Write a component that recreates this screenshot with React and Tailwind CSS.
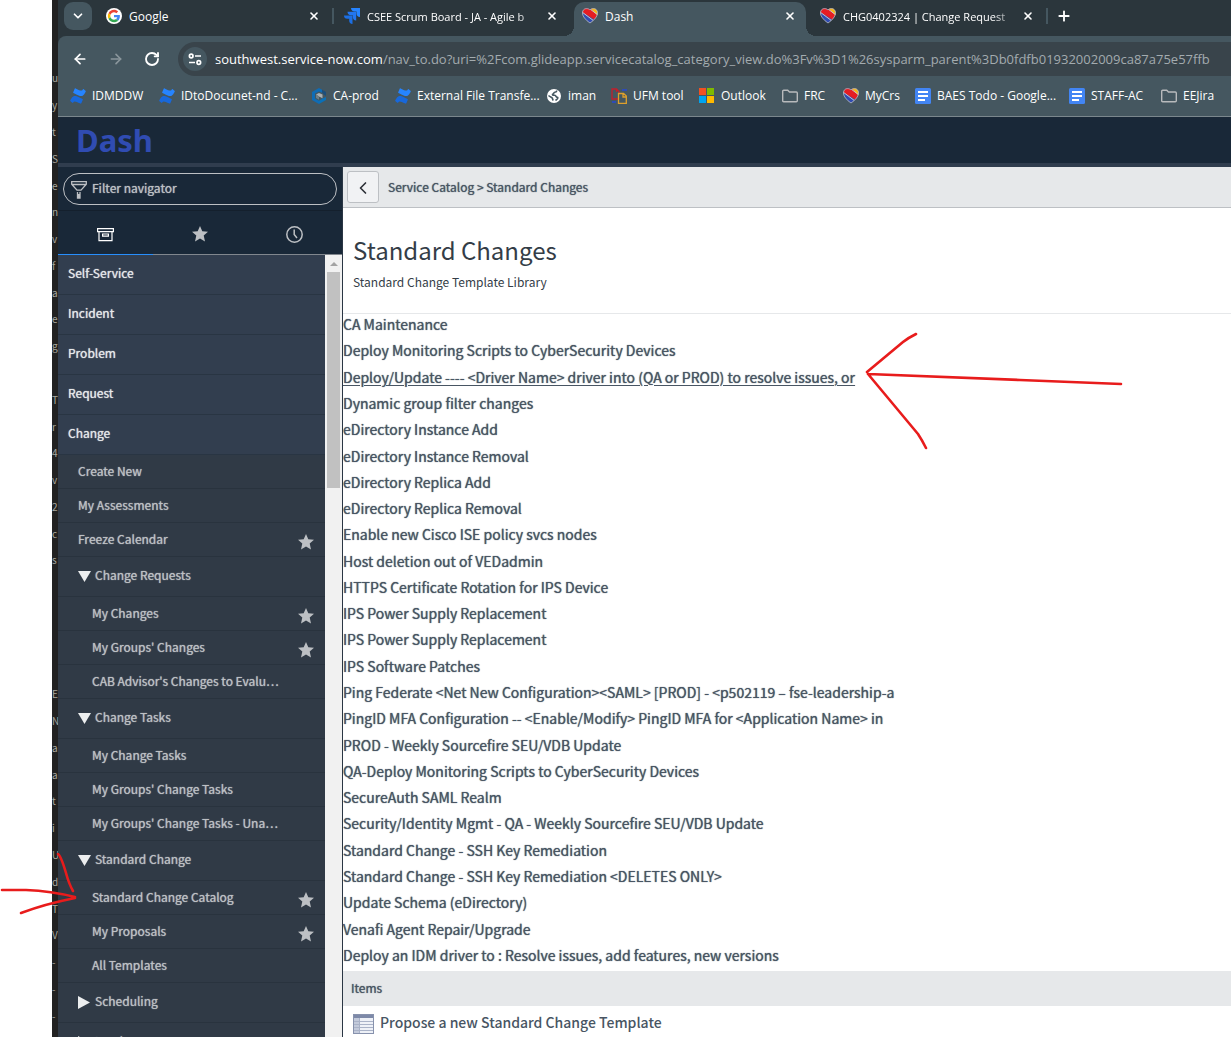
import React from "react";
import { ArrowLeft, ArrowRight, RotateCw, ChevronDown, ChevronLeft, Plus, X } from "lucide-react";

const UI = "font-['Open_Sans','Noto_Sans',sans-serif]";
const SRC = "font-['Noto_Sans_CJK_SC','Noto_Sans',sans-serif]";

function GoogleIcon() {
  return (
    <svg className="size-4 shrink-0" viewBox="0 0 48 48" aria-hidden="true">
      <circle cx="24" cy="24" r="24" fill="#fff" />
      <g transform="translate(5.5 5.5) scale(.77)">
        <path fill="#EA4335" d="M24 9.5c3.54 0 6.71 1.22 9.21 3.6l6.85-6.85C35.9 2.38 30.47 0 24 0 14.62 0 6.51 5.38 2.56 13.22l7.98 6.19C12.43 13.72 17.74 9.5 24 9.5z" />
        <path fill="#4285F4" d="M46.98 24.55c0-1.57-.15-3.09-.38-4.55H24v9.02h12.94c-.58 2.96-2.26 5.48-4.78 7.18l7.73 6c4.51-4.18 7.09-10.36 7.09-17.65z" />
        <path fill="#FBBC05" d="M10.53 28.59A14.5 14.5 0 0 1 9.77 24c0-1.6.27-3.14.76-4.59l-7.98-6.19A23.9 23.9 0 0 0 0 24c0 3.88.92 7.54 2.56 10.78l7.97-6.19z" />
        <path fill="#34A853" d="M24 48c6.48 0 11.93-2.13 15.89-5.81l-7.73-6c-2.15 1.45-4.92 2.3-8.16 2.3-6.26 0-11.57-4.22-13.47-9.91l-7.98 6.19C6.51 42.62 14.62 48 24 48z" />
      </g>
    </svg>
  );
}

function JiraIcon() {
  return (
    <svg className="size-4 shrink-0" viewBox="0 0 16 16" aria-hidden="true">
      <path fill="#2684ff" d="M7 0h9v9c-2.200 0-3.500-1.500-3.500-3.500v-2h-2C8.500 3.500 7 2.200 7 0z" />
      <path fill="#2276f0" d="M3.500 3.800h8.700v8.700c-2.200 0-3.400-1.500-3.400-3.400V7.200H6.900c-2 0-3.400-1.200-3.400-3.400z" />
      <path fill="#1c6fe3" d="M0 7.500h8.500V16c-2.200 0-3.300-1.500-3.300-3.300v-1.900H3.300C1.300 10.800 0 9.600 0 7.500z" />
    </svg>
  );
}

function HeartIcon() {
  return (
    <svg className="size-4 shrink-0" viewBox="0 0 16 16" aria-hidden="true">
      <defs>
        <clipPath id="heart">
          <path d="M8 2C6.500.3 3 0 1.400 2-.4 4.500.6 7.500 2.500 10c1.500 2 3.500 3.800 5.500 5 2-1.200 4-3 5.500-5 1.900-2.500 2.900-5.500 1.100-8C13 0 9.500.3 8 2z" />
        </clipPath>
      </defs>
      <g clipPath="url(#heart)">
        <path fill="#304cb2" d="M0 0h16v16H0z" />
        <path fill="#e51d23" d="M0 0h10l6 6v4l-3 2L0 4z" />
        <path fill="#f9b612" d="M8 0h8v8z" />
        <path stroke="#c6c9cc" d="M0 4l12 9M8 1l8 6" />
      </g>
      <path fill="none" stroke="#b9bcc2" strokeWidth=".8" d="M8 2C6.500.3 3 0 1.400 2-.4 4.500.6 7.500 2.500 10c1.500 2 3.500 3.800 5.500 5 2-1.200 4-3 5.500-5 1.900-2.500 2.900-5.500 1.100-8C13 0 9.500.3 8 2z" />
    </svg>
  );
}

function ConfluenceIcon() {
  return (
    <svg className="size-4 shrink-0" viewBox="0 0 16 16" aria-hidden="true">
      <path fill="#1868db" d="M.3 12.300 1.800 9.800C3.600 7.300 5.700 7.600 9 9.200l3.500 1.700c.4.200.5.500.3.900l-1.500 3.500c-.2.400-.5.500-.9.300C5.200 13.200 4.500 12.600 3.200 14.600c-.3.400-.6.400-.9.200L.5 13.200c-.3-.2-.4-.5-.2-.9z" />
      <path fill="#2684ff" d="M15.700 3.700 14.200 6.200C12.400 8.700 10.300 8.400 7 6.800L3.500 5.100c-.4-.2-.5-.5-.3-.9L4.700.7c.2-.4.5-.5.9-.3 5.200 2.400 5.900 3 7.200 1 .3-.4.6-.4.900-.2l1.800 1.600c.3.200.4.500.2.900z" />
    </svg>
  );
}

function CubeIcon() {
  return (
    <svg className="size-4 shrink-0" viewBox="0 0 16 16" aria-hidden="true">
      <path fill="#0f6cb6" d="m8 0 3 1.700v3L8 3.500 4 5.500v5l4 2.200v3.300l-7-4V4z" />
      <path fill="#1d4f7c" d="m11 1.700 4 2.300v4l-3-2V5.200l-1-.5z" />
      <path fill="#0a70b8" d="m15 9-3 1.200L8 12.700V16l7-4z" />
      <path fill="#a8b0b5" d="m8 5 3.500 1.500v3.700L8 8.500 5 6.600z" />
      <path fill="#6b7f8a" d="M5 6.600 8 8.500v3.300L5 10z" />
    </svg>
  );
}

function GlobeIcon() {
  return (
    <svg className="size-4 shrink-0" viewBox="0 0 16 16" aria-hidden="true">
      <circle cx="8" cy="8" r="7" fill="#fff" />
      <path fill="none" stroke="#455760" strokeWidth="1.600" d="M10.800 2.500c0 1.500-1 1.700-2 1.800-1.200.2-.9 1.500-1.900 1.700-.6.100-.5 1.200.3 1.300h1.600c1.200.2.9 1.600 2 1.800.8.100 1.200.2 1 1-.3 1.200-1.500 1.400-2.300 2.400M2.500 7.500c1.500 1.500 3.300 1.600 3.800 2.600.4 1 .3 1.500 1 2.400" />
    </svg>
  );
}

function UfmIcon() {
  return (
    <svg className="size-4 shrink-0" viewBox="0 0 16 16" fill="none" strokeWidth="1.300" aria-hidden="true">
      <path stroke="#c41f2b" d="M7 11H1V1h4.500L8 3.500V5M5.500 1v3" />
      <path stroke="#dfa02b" d="M7.500 5.500h5L15.300 8v7.300H7.500zM12 5.500V9h3" />
      <path stroke="#2e4bb5" strokeWidth="2" d="M11 2h5M1 14h4" />
    </svg>
  );
}

function MicrosoftIcon() {
  return (
    <svg className="size-4 shrink-0" viewBox="0 0 16 16" aria-hidden="true">
      <path fill="#f25022" d="M0 0h7v7H0z" />
      <path fill="#7fba00" d="M8 0h7v7H8z" />
      <path fill="#00a4ef" d="M0 8h7v7H0z" />
      <path fill="#ffb900" d="M8 8h7v7H8z" />
    </svg>
  );
}

function DocsIcon() {
  return (
    <svg className="size-4 shrink-0" viewBox="0 0 16 16" aria-hidden="true">
      <rect width="16" height="16" rx="1.500" fill="#4285f4" />
      <path fill="#fff" d="M3 3h10v2H3zM3 7h10v2H3zM3 11h7v2H3z" />
    </svg>
  );
}

function FolderIcon() {
  return (
    <svg className="size-4 shrink-0" viewBox="0 0 16 16" fill="none" stroke="#b8babc" strokeWidth="1.400" aria-hidden="true">
      <path d="M.7 3.200q0-1 1-1h4l1.800 1.800h6.800q1 0 1 1v7.800q0 1-1 1H1.700q-1 0-1-1z" />
    </svg>
  );
}

function StarIcon({ className }) {
  return (
    <svg className={className} viewBox="0 0 16 16" fill="currentColor" aria-hidden="true">
      <path d="m8 0 2.300 5.300 5.700.5-4.300 3.800 1.300 5.900L8 12.500l-5 3 1.300-5.900L0 5.800l5.700-.5z" />
    </svg>
  );
}

const tabs = [
  { title: "Google", Icon: GoogleIcon, divider: true },
  { title: "CSEE Scrum Board - JA - Agile b", Icon: JiraIcon, fade: true },
  { title: "Dash", Icon: HeartIcon, active: true },
  { title: "CHG0402324 | Change Request", Icon: HeartIcon, divider: true, fade: true },
];

const bookmarks = [
  { label: "IDMDDW", Icon: ConfluenceIcon, w: "w-[89px]" },
  { label: "IDtoDocunet-nd - C...", Icon: ConfluenceIcon, w: "w-[152px]" },
  { label: "CA-prod", Icon: CubeIcon, w: "w-[84px]" },
  { label: "External File Transfe...", Icon: ConfluenceIcon, w: "w-[151px]" },
  { label: "iman", Icon: GlobeIcon, w: "w-[65px]" },
  { label: "UFM tool", Icon: UfmIcon, w: "w-[88px]" },
  { label: "Outlook", Icon: MicrosoftIcon, w: "w-[83px]" },
  { label: "FRC", Icon: FolderIcon, w: "w-[61px]" },
  { label: "MyCrs", Icon: HeartIcon, w: "w-[72px]" },
  { label: "BAES Todo - Google...", Icon: DocsIcon, w: "w-[154px]" },
  { label: "STAFF-AC", Icon: DocsIcon, w: "w-[92px]" },
  { label: "EEJira", Icon: FolderIcon, w: "w-[70px]" },
];

const apps = ["Self-Service", "Incident", "Problem", "Request", "Change"];

const modules = [
  { label: "Create New" },
  { label: "My Assessments" },
  { label: "Freeze Calendar", star: true },
  { label: "Change Requests", group: "open" },
  { label: "My Changes", sub: true, star: true },
  { label: "My Groups' Changes", sub: true, star: true },
  { label: "CAB Advisor's Changes to Evalu…", sub: true },
  { label: "Change Tasks", group: "open" },
  { label: "My Change Tasks", sub: true },
  { label: "My Groups' Change Tasks", sub: true },
  { label: "My Groups' Change Tasks - Una…", sub: true },
  { label: "Standard Change", group: "open" },
  { label: "Standard Change Catalog", sub: true, star: true },
  { label: "My Proposals", sub: true, star: true },
  { label: "All Templates", sub: true },
  { label: "Scheduling", group: "closed" },
  { label: "Landscape", group: "closed" },
];

const templates = [
  "CA Maintenance",
  "Deploy Monitoring Scripts to CyberSecurity Devices",
  "Deploy/Update ---- <Driver Name> driver into (QA or PROD) to resolve issues, or",
  "Dynamic group filter changes",
  "eDirectory Instance Add",
  "eDirectory Instance Removal",
  "eDirectory Replica Add",
  "eDirectory Replica Removal",
  "Enable new Cisco ISE policy svcs nodes",
  "Host deletion out of VEDadmin",
  "HTTPS Certificate Rotation for IPS Device",
  "IPS Power Supply Replacement",
  "IPS Power Supply Replacement",
  "IPS Software Patches",
  "Ping Federate <Net New Configuration><SAML> [PROD] - <p502119 – fse-leadership-a",
  "PingID MFA Configuration -- <Enable/Modify> PingID MFA for <Application Name> in",
  "PROD - Weekly Sourcefire SEU/VDB Update",
  "QA-Deploy Monitoring Scripts to CyberSecurity Devices",
  "SecureAuth SAML Realm",
  "Security/Identity Mgmt - QA - Weekly Sourcefire SEU/VDB Update",
  "Standard Change - SSH Key Remediation",
  "Standard Change - SSH Key Remediation <DELETES ONLY>",
  "Update Schema (eDirectory)",
  "Venafi Agent Repair/Upgrade",
  "Deploy an IDM driver to : Resolve issues, add features, new versions",
];

const stripText = [
  "u", "y", "t", "S", "e", "n", "v", "f", "a", "e", "g", "", "T", "r", "4", "v", "2", "c", "s", "",
  "", "", "", "E", "N", "a", "a", "t", "i", "U", "d", "T", "V", "-", "-", "-",
];

function BackgroundStrip() {
  return (
    <div aria-hidden="true" className="flex w-1.5 shrink-0 flex-col overflow-hidden bg-[#222] pt-[65px] pb-2 text-[10px] text-[#a8a8a0]">
      {stripText.map((t, i) => (
        <div key={i} className="flex min-h-0 flex-1 items-center leading-none">{t}</div>
      ))}
    </div>
  );
}

function Tab({ title, Icon, active, divider, fade }) {
  return (
    <div className={"relative flex h-[34px] w-[232px] shrink-0 items-center pr-2.5 pb-1.5 pl-2 " + (active ? "rounded-t-[10px] bg-[#455760]" : "")}>
      {active && (
        <>
          <span className="absolute bottom-0 -left-2.5 size-2.5 bg-[radial-gradient(circle_at_0_0,transparent_10px,#455760_10px)]" />
          <span className="absolute -right-2.5 bottom-0 size-2.5 bg-[radial-gradient(circle_at_100%_0,transparent_10px,#455760_10px)]" />
        </>
      )}
      <Icon />
      <span className={"ml-[7px] w-[171px] overflow-hidden pt-0.5 whitespace-nowrap " + (fade ? "text-[11px] [mask-image:linear-gradient(to_right,#000_150px,transparent_175px)]" : "")}>{title}</span>
      <button type="button" aria-label={"Close " + title} className="ml-auto">
        <X className="size-3" strokeWidth={3.2} />
      </button>
      {divider && <span className="absolute top-1.5 -right-1 h-4 w-0.5 bg-[#455760]" />}
    </div>
  );
}

function BrowserChrome() {
  return (
    <header className={UI + " shrink-0 text-[12px] text-white"}>
      <div className="flex h-9 items-end bg-[#2b363c]">
        <button type="button" aria-label="Search tabs" className="mb-1.5 ml-1.5 flex size-7 shrink-0 items-center justify-center rounded-[9px] bg-[#455760]">
          <ChevronDown className="size-3.5" strokeWidth={3} />
        </button>
        <div className="ml-1.5 flex gap-1.5">
          {tabs.map((t) => <Tab key={t.title} {...t} />)}
        </div>
        <button type="button" aria-label="New tab" className="mb-3 ml-3">
          <Plus className="size-4" strokeWidth={2.8} />
        </button>
      </div>
      <div className="bg-[#2b363c]">
        <div className="rounded-tl-lg border-b border-[#7b878d] bg-[#455760]">
          <div className="flex items-center pt-1.5">
            <button type="button" aria-label="Back" className="ml-3.5"><ArrowLeft className="size-4" strokeWidth={2.6} /></button>
            <button type="button" aria-label="Forward" className="ml-5 text-[#8a969c]"><ArrowRight className="size-4" strokeWidth={2.4} /></button>
            <button type="button" aria-label="Reload" className="ml-5"><RotateCw className="size-4" strokeWidth={2.8} /></button>
            <div className="ml-[18px] flex h-[34px] min-w-0 flex-1 items-center overflow-hidden rounded-l-full bg-[#39444b] pl-[5px]">
              <span className="flex size-6 shrink-0 items-center justify-center rounded-full bg-[#455760]">
                <svg className="size-3.5" viewBox="0 0 14 14" fill="none" stroke="#fff" strokeWidth="1.700" aria-hidden="true">
                  <circle cx="3.200" cy="4" r="1.800" /><path d="M7 4h6M1 10.500h6" /><circle cx="10.800" cy="10.500" r="1.800" />
                </svg>
              </span>
              <span className="ml-2 pt-0.5 text-[13px] whitespace-nowrap text-[#a3abaf]">
                <span className="text-white">southwest.service-now.com</span>/nav_to.do?uri=%2Fcom.glideapp.servicecatalog_category_view.do%3Fv%3D1%26sysparm_parent%3Db0fdfb01932002009ca87a75e57ffb
              </span>
            </div>
          </div>
          <nav aria-label="Bookmarks" className="flex h-10 items-center overflow-hidden pl-3">
            {bookmarks.map(({ label, Icon, w }) => (
              <a key={label} href="#" className={w + " flex shrink-0 items-center gap-1.5 whitespace-nowrap"}>
                <Icon />{label}
              </a>
            ))}
          </nav>
        </div>
      </div>
    </header>
  );
}

function Triangle({ open }) {
  return (
    <svg className="mt-1 mr-1 size-[13px] shrink-0 text-[#eceeef]" viewBox="0 0 13 13" fill="currentColor" aria-hidden="true">
      <path d={open ? "M0 1h13L6.500 12z" : "M0 0v13l12-6.500z"} />
    </svg>
  );
}

function Sidebar() {
  return (
    <aside className="flex w-[285px] shrink-0 flex-col border-r border-[#2a3644] bg-[#192838]">
      <div className="border-b border-[#14202d] px-[5px] pt-1.5 pb-[5px]">
        <label className="flex h-8 items-center rounded-full border border-[#bdc0c4] pl-[7px]">
          <svg className="mt-0.5 h-[18px] w-4 shrink-0" viewBox="0 0 16 18" fill="none" stroke="#bdc0c4" strokeWidth="1.300" aria-hidden="true">
            <path d="M.7.700h14.600v2.500L10 9.200H6L.7 3.200zM.7 3.500h14.600M6.500 11v6H9v-6M7.800 13v4" />
          </svg>
          <input aria-label="Filter navigator" placeholder="Filter navigator" className="mb-0.5 ml-[5px] min-w-0 flex-1 bg-transparent text-[12px] text-white outline-none [text-shadow:0_0_1px_#bdc0c4] placeholder:text-[#bdc0c4]" />
        </label>
      </div>
      <div className="grid h-11 shrink-0 grid-cols-3 text-[#bdc0c4]">
        <button type="button" aria-label="All applications" className="flex items-center justify-center border-b border-[#278efc] text-white">
          <svg className="mt-1 size-[17px]" viewBox="0 0 17 17" fill="none" stroke="currentColor" strokeWidth="1.200" aria-hidden="true">
            <path d="M.6 2.600h15.800v3H.6zM2 5.600v9h13v-9M5.600 8h5.800v2.200H5.600z" />
          </svg>
        </button>
        <button type="button" aria-label="Favorites" className="flex items-center justify-center border-b border-[#81878e]">
          <StarIcon className="mt-0.5 size-4" />
        </button>
        <button type="button" aria-label="History" className="flex items-center justify-center border-b border-[#81878e]">
          <svg className="mt-1 size-[17px]" viewBox="0 0 17 17" fill="none" stroke="currentColor" strokeWidth="1.500" aria-hidden="true">
            <circle cx="8.500" cy="8.500" r="7.700" /><path d="M8.200 3.500v5l2.800 3.500" />
          </svg>
        </button>
      </div>
      <div className="flex min-h-0 flex-1">
        <nav aria-label="Applications" className="min-w-0 flex-1 overflow-hidden bg-[#303a46] text-[12px] [text-shadow:0_0_1px_currentColor]">
          {apps.map((a) => (
            <a key={a} href="#" className="flex h-10 items-center border-b border-[#293543] bg-[#323e4f] pb-1 pl-2.5 text-[#e6e8ea]">{a}</a>
          ))}
          {modules.map((m) => (
            <a key={m.label} href="#" className={"flex items-center border-b border-[#29333e] pr-[11px] text-[#bdc0c4] " + (m.group ? "h-10 pb-1 pl-5" : m.sub ? "h-[34px] pb-0.5 pl-[34px]" : "h-[34px] pb-0.5 pl-5")}>
              {m.group && <Triangle open={m.group === "open"} />}
              <span className="whitespace-nowrap">{m.label}</span>
              {m.star && <StarIcon className="mt-1.5 ml-auto size-4 shrink-0" />}
            </a>
          ))}
        </nav>
        <div aria-hidden="true" className="flex w-[17px] shrink-0 flex-col items-center bg-[#f1f1f1]">
          <svg className="h-[17px] w-2" viewBox="0 0 8 17"><path fill="#a3a3a3" d="M4 7l4 4H0z" /></svg>
          <div className="h-[216px] w-[13px] bg-[#c1c1c1]" />
        </div>
      </div>
    </aside>
  );
}

function Catalog() {
  return (
    <main className="min-w-0 flex-1 bg-white text-[#485563]">
      <div className="flex h-[41px] items-center border-b border-[#bdc0c4] bg-[#e6e8ea] pl-1">
        <button type="button" aria-label="Back" className="flex size-8 items-center justify-center rounded-[3px] border border-[#bdc0c4] bg-[#f1f2f4] text-[#2e3138]">
          <ChevronLeft className="mt-0.5 size-5" strokeWidth={2} />
        </button>
        <nav aria-label="Breadcrumb" className="ml-[9px] text-[12px] [text-shadow:0_0_1px_currentColor]">
          <a href="#">Service Catalog</a> &gt; <a href="#">Standard Changes</a>
        </nav>
      </div>
      <div className="h-[106px] border-b border-[#e6e8ea] pt-6 pl-2.5 text-[#343d47]">
        <h1 className="text-[24px] leading-9">Standard Changes</h1>
        <p className="mt-1 text-[12px] leading-5">Standard Change Template Library</p>
      </div>
      <ul className="grid min-h-[657px] auto-rows-fr text-[14px] [text-shadow:0_0_1px_currentColor]">
        {templates.map((t, i) => (
          <li key={i} className="flex items-center pb-1.5 whitespace-nowrap">
            <a href="#" className={"leading-5 " + (i === 2 ? "underline underline-offset-2" : "")}>{t}</a>
          </li>
        ))}
      </ul>
      <h2 className="flex h-[35px] items-center bg-[#e6e8ea] pb-0.5 pl-2 text-[12px] [text-shadow:0_0_1px_currentColor]">Items</h2>
      <a href="#" className="flex h-8 items-center pl-2.5 text-[14px] font-medium">
        <svg className="mt-1 mr-1.5 h-5 w-[21px]" viewBox="0 0 21 20" aria-hidden="true">
          <rect x=".5" y=".5" width="20" height="19" fill="#eef1f7" stroke="#8792ad" />
          <path fill="#7d89a8" d="M1 1h19v3H1z" />
          <path fill="#c3cadb" d="M1 4h5v15H1z" />
          <path stroke="#aab3c8" d="M1 7.500h19M1 10.500h19M1 13.500h19M1 16.500h19M6.500 4v15" />
        </svg>
        Propose a new Standard Change Template
      </a>
    </main>
  );
}

function Annotations() {
  return (
    <svg className="pointer-events-none absolute top-0 left-0" width="1231" height="1037" fill="none" stroke="#e81c1c" strokeWidth="2.600" strokeLinecap="round" strokeLinejoin="round" aria-hidden="true">
      <path d="M1121 384 1020 380 868 374M867 372l36-30q5-4 13-8M868 374l50 60q4 6 8 14" />
      <path d="M2 890h24q25 1 49 7M21 913q24-9 54-15M58 854q3 2 8 19 3 11 7 18" />
    </svg>
  );
}

export default function App() {
  return (
    <div className={SRC + " relative flex h-screen overflow-hidden bg-white pl-[52px]"}>
      <BackgroundStrip />
      <div className="flex min-w-0 flex-1 flex-col">
        <BrowserChrome />
        <div className="flex h-[50px] shrink-0 items-center border-b-4 border-[#303d4e] bg-[#192838] pl-[18px]">
          <span className="font-['Noto_Sans',sans-serif] text-[31px] leading-none font-bold text-[#304cb2]">Dash</span>
        </div>
        <div className="flex min-h-0 flex-1">
          <Sidebar />
          <Catalog />
        </div>
      </div>
      <Annotations />
    </div>
  );
}
